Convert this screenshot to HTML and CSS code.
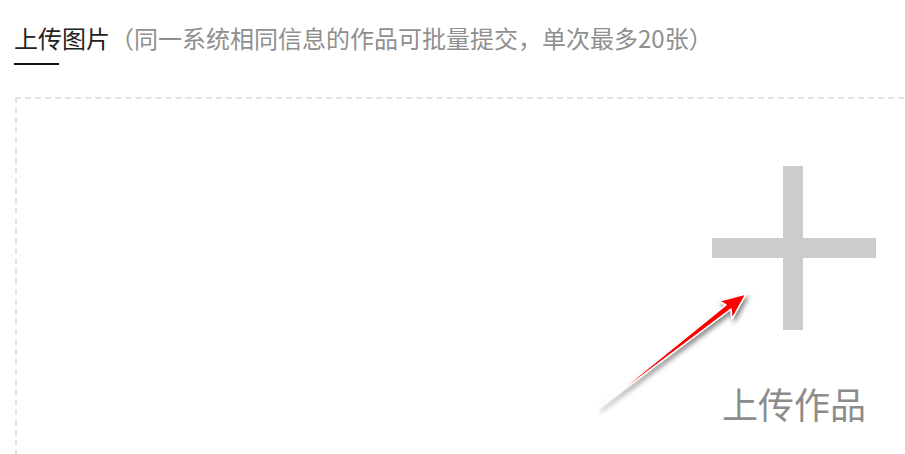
FILE: index.html
```html
<!DOCTYPE html>
<html lang="zh-CN">
<head>
<meta charset="utf-8">
<link rel="stylesheet" href="styles.css">
</head>
<body>
<div class="page">
  <div class="section-head">
    <h2 class="title">上传图片<span class="hint">（同一系统相同信息的作品可批量提交，单次最多20张）</span></h2>
    <div class="title-line"></div>
  </div>
  <div class="drop-box">
    <div class="upload-item">
      <div class="plus"></div>
      <div class="upload-label">上传作品</div>
    </div>
  </div>
</div>
<svg class="annot" width="905" height="454" viewBox="0 0 905 454">
  <defs>
    <filter id="sh" x="-20%" y="-20%" width="140%" height="140%">
      <feDropShadow dx="2" dy="3" stdDeviation="2.5" flood-color="#000" flood-opacity="0.5"/>
    </filter>
  </defs>
  <polygon points="599,408 726,305 719,301 746,294 732,319 731,309" fill="#ff0000" stroke="#ffffff" stroke-width="1.5" stroke-linejoin="round" filter="url(#sh)"/>
</svg>
</body>
</html>
```
FILE: styles.css
```css
html, body {
  margin: 0;
  padding: 0;
  background: #ffffff;
  overflow: hidden;
}
body {
  width: 905px;
  height: 454px;
  position: relative;
  font-family: "Noto Sans CJK SC", "Noto Sans", sans-serif;
}
.page {
  padding: 20px 0 0 14px;
  height: 454px;
  box-sizing: border-box;
  overflow: hidden;
}
.section-head {
  display: flex;
  flex-direction: column;
}
.title {
  margin: 0;
  font-size: 24px;
  font-weight: normal;
  line-height: 36px;
  color: #222;
  white-space: nowrap;
}
.hint {
  color: #8f8f8f;
}
.title-line {
  width: 45px;
  height: 2px;
  background: #111;
  margin-top: 7px;
}
.drop-box {
  margin-top: 32px;
  margin-left: 1px;
  width: 1100px;
  height: 500px;
  border: 2px dashed #e3e3e3;
  box-sizing: border-box;
  display: flex;
  padding: 67px 0 0 695px;
}
.upload-item {
  display: flex;
  flex-direction: column;
  align-items: center;
  width: 164px;
}
.plus {
  width: 164px;
  height: 164px;
  position: relative;
}
.plus::before,
.plus::after {
  content: "";
  position: absolute;
  background: #cccccc;
}
.plus::before {
  left: 0;
  right: 0;
  top: 72px;
  height: 20px;
}
.plus::after {
  top: 0;
  bottom: 0;
  left: 71px;
  width: 20px;
}
.upload-label {
  margin-top: 48px;
  font-size: 36px;
  line-height: 50px;
  color: #8c8c8c;
  white-space: nowrap;
}
.annot {
  position: absolute;
  left: 0;
  top: 0;
  pointer-events: none;
}
```
